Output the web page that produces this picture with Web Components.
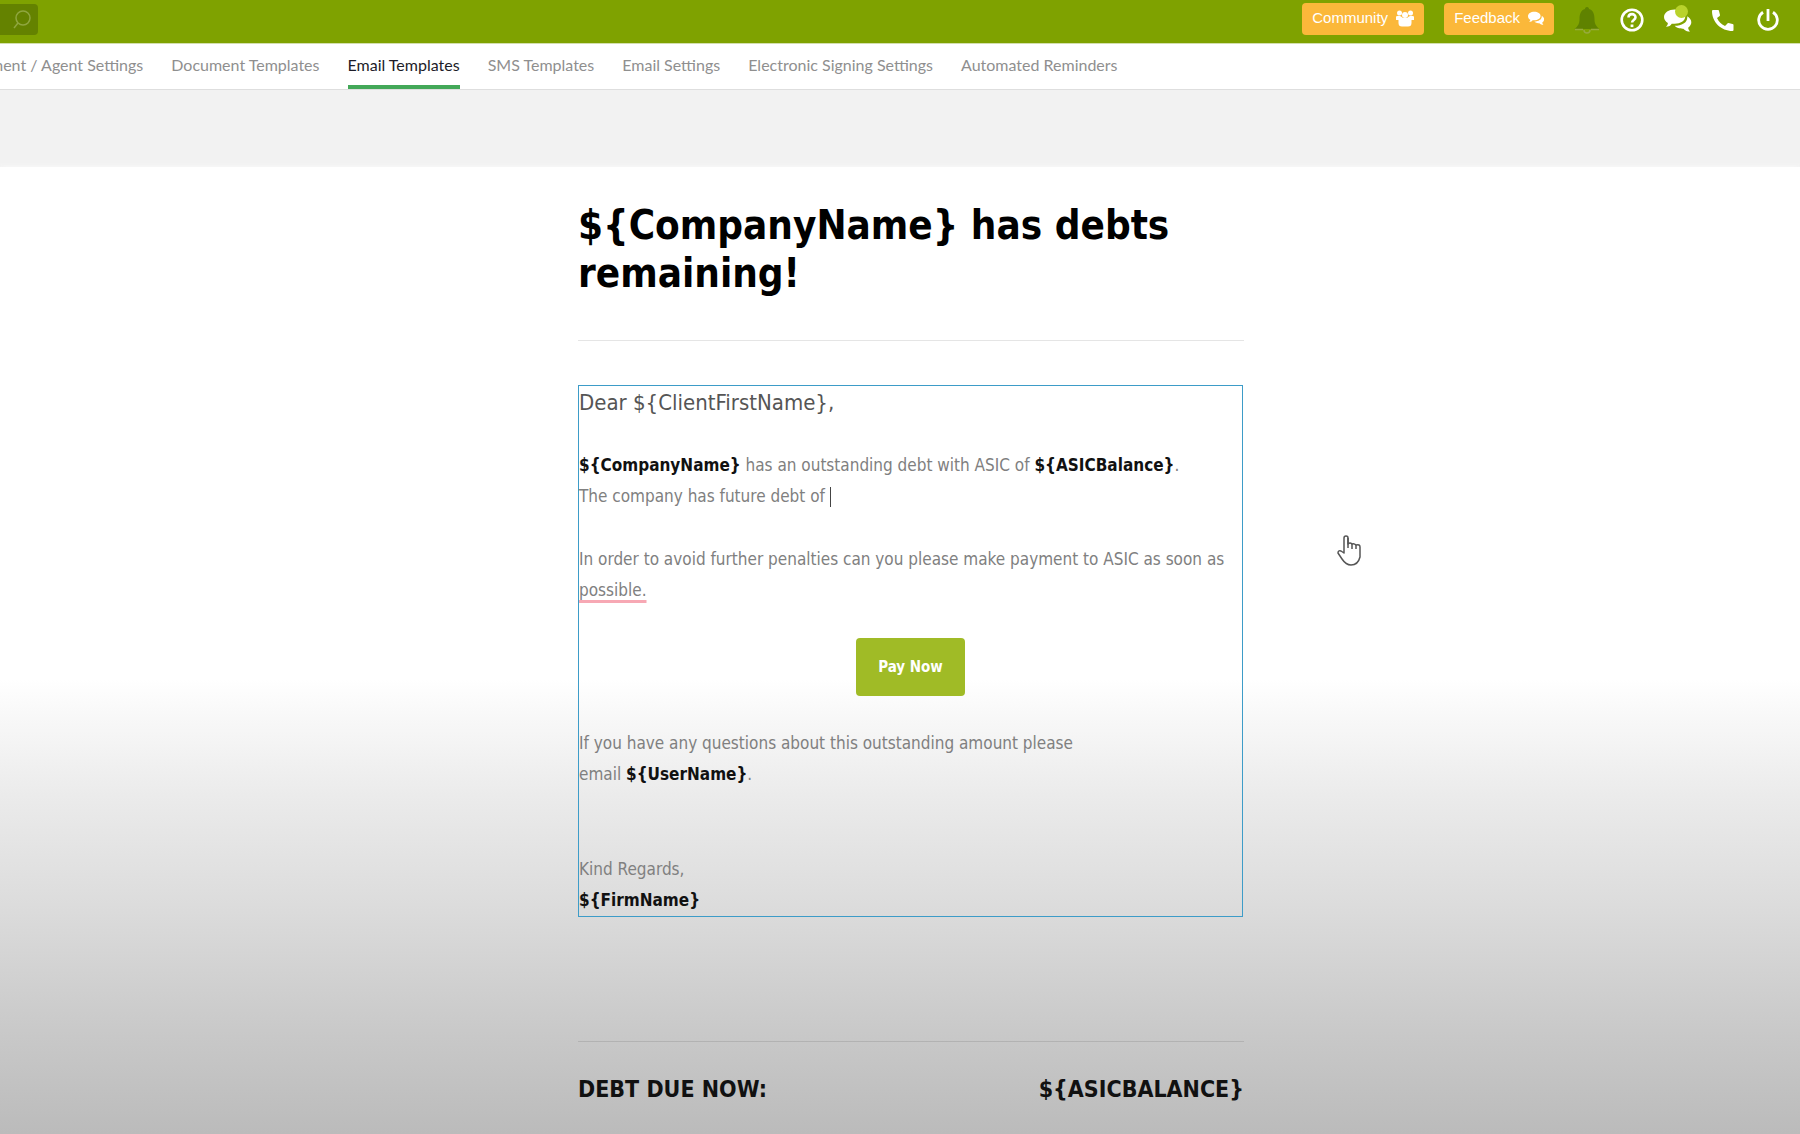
<!DOCTYPE html>
<html lang="en">
<head>
<meta charset="utf-8">
<title>Email Templates</title>
<style>
html, body
{
    height: 100%;
    margin: 0;
}
body
{
    display: flex;
    flex-direction: column;
    overflow: hidden;
    background: #f2f2f2;
    font-family: "DejaVu Sans Condensed", "DejaVu Sans", sans-serif;
}
</style>
</head>
<body>
<top-bar>
    <pill-button icon="people">Community</pill-button>
    <pill-button icon="chat">Feedback</pill-button>
</top-bar>
<tab-bar>
    <tab-link>ment / Agent Settings</tab-link>
    <tab-link>Document Templates</tab-link>
    <tab-link active>Email Templates</tab-link>
    <tab-link>SMS Templates</tab-link>
    <tab-link>Email Settings</tab-link>
    <tab-link>Electronic Signing Settings</tab-link>
    <tab-link>Automated Reminders</tab-link>
</tab-bar>
<email-page>
    <span slot="title">${CompanyName} has debts remaining!</span>
    <email-body></email-body>
    <span slot="due">DEBT DUE NOW:</span>
    <span slot="amount">${ASICBALANCE}</span>
</email-page>
<hand-pointer></hand-pointer>

<script>
const icons =
{
    people: `<svg width="18" height="18" viewBox="0 0 18 18" fill="#fff">
        <circle cx="3.500" cy="4" r="2.500"></circle><circle cx="14.500" cy="4" r="2.500"></circle><circle cx="9" cy="6" r="3"></circle>
        <path d="M0 7.500Q3 6 5 7.500L7 9H11L13 7.500Q15 6 18 7.500V11H15.500V14Q15.500 17.500 12 17.500H6Q2.500 17.500 2.500 14V11H0Z"></path></svg>`,
    chat: `<svg width="16" height="14" viewBox="0 0 28 24" fill="#fff">
        <path d="M11 1C5 1 0 4 0 9c0 3 2 5 4 6 0 2-1 3-2 4 3 0 5-1 6-3h3c6 0 11-3 11-7.500S17 1 11 1Z"></path>
        <path d="M24 8c1 6-5 10-13 10 3 3 7 3 9 3 2 2 4 3 7 3-1-1-2-3-2-4 5-4 4-9-1-12Z"></path></svg>`,
    bell: `<svg width="26" height="28" viewBox="0 0 26 28">
        <path d="M13 1c-1.500 0-2 1-2 2C7 4 5.500 8 5.500 13c0 5-1.500 7-5 10H25.500c-3.500-3-5-5-5-10C20.500 8 19 4 15 3c0-1-.5-2-2-2Z" fill="#5f8200"></path>
        <path d="M1 23.500H9M17 23.500H25M10 24q0 3 3 3t3-3" fill="none" stroke="#96aa3c" stroke-width="1.500"></path></svg>`,
    help: `<svg width="24" height="24" viewBox="0 0 24 24" fill="none" stroke="#fff">
        <circle cx="12" cy="12" r="10.300" stroke-width="2.600"></circle>
        <path d="M8.500 9.500C8.500 5 15.500 5 15.500 9.300c0 2.700-3.400 2.700-3.400 5.200" stroke-width="2.600"></path>
        <path d="M12 16.500v2.600" stroke-width="2.800"></path></svg>`,
    chats: `<svg width="28" height="24" viewBox="0 0 29 24" fill="#fff">
        <path d="M11 1C5 1 0 4 0 9c0 3 2 5 4 6 0 2-1 3-2 4 3 0 5-1 6-3h3c6 0 11-3 11-7.500S17 1 11 1Z"></path>
        <path d="M24 8c1 6-5 10-13 10 3 3 7 3 9 3 2 2 4 3 7 3-1-1-2-3-2-4 5-4 4-9-1-12Z"></path></svg>`,
    phone: `<svg width="25" height="22" viewBox="0 0 25 22" fill="#fff">
        <path d="M1 1h5q1 0 1 1l1 4q0 1-1 1.500L5 9c2 4 4 6 8 8l2-2q.5-1 1.500-1l4 1q1 .2 1 1v5q0 1-1 1C9 22 0 13 0 2q0-1 1-1Z"></path></svg>`,
    power: `<svg width="22" height="22" viewBox="0 0 22 22" fill="none" stroke="#fff" stroke-width="2.800">
        <path d="M6 3.200a9.300 9.300 0 1 0 10 0M11 0v12"></path></svg>`,
    search: `<svg width="18" height="20" viewBox="0 0 18 20" fill="none" stroke="#8fa63f" stroke-width="1.500">
        <circle cx="10" cy="8" r="7"></circle><path d="M5 13L1 18"></path></svg>`
};

class PillButton extends HTMLElement
{
    connectedCallback()
    {
        let root = this.attachShadow({mode: "open"});
        root.innerHTML =
        `<style>
        :host
        {
            display: block;
        }
        button
        {
            display: flex;
            align-items: center;
            gap: 8px;
            height: 32px;
            padding: 0 10px 2px;
            border: 0;
            border-radius: 4px;
            background: #fbb83a;
            color: #fff;
            font: 15px/20px "Liberation Sans", sans-serif;
        }
        svg
        {
            display: block;
        }
        </style>
        <button type="button"><slot></slot>${icons[this.getAttribute("icon")]}</button>`;
    }
}

customElements.define("pill-button", PillButton);


class IconButton extends HTMLElement
{
    connectedCallback()
    {
        let root = this.attachShadow({mode: "open"});
        root.innerHTML =
        `<style>
        :host
        {
            display: block;
            position: relative;
        }
        button
        {
            display: block;
            padding: 0;
            border: 0;
            background: none;
        }
        svg
        {
            display: block;
        }
        .badge
        {
            position: absolute;
            top: -3px;
            right: 4px;
            width: 13px;
            height: 13px;
            border-radius: 50%;
            background: #b9d22c;
        }
        </style>
        <button type="button" aria-label="${this.getAttribute("icon")}">${icons[this.getAttribute("icon")]}</button>
        ${this.hasAttribute("badge") ? '<span class="badge"></span>' : ""}`;
    }
}

customElements.define("icon-button", IconButton);


class TopBar extends HTMLElement
{
    connectedCallback()
    {
        let root = this.attachShadow({mode: "open"});
        root.innerHTML =
        `<style>
        :host
        {
            display: flex;
            justify-content: space-between;
            height: 44px;
            background: #7fa200;
            border-bottom: 1px solid #d3dfae;
            box-sizing: border-box;
            flex: none;
        }
        label
        {
            display: flex;
            align-items: center;
            align-self: flex-start;
            box-sizing: border-box;
            width: 38px;
            height: 31px;
            margin-top: 4px;
            border-radius: 0 4px 4px 0;
            background: #648200;
        }
        input
        {
            width: 13px;
            padding: 0;
            border: 0;
            background: none;
            outline: none;
        }
        .actions
        {
            display: flex;
            align-items: flex-start;
            gap: 20px;
            padding: 3px 21px 0 0;
        }
        .icons
        {
            display: flex;
            align-items: center;
            gap: 20px;
            height: 34px;
        }
        </style>
        <label><input type="text" aria-label="Search">${icons.search}</label>
        <div class="actions">
            <slot></slot>
            <div class="icons">
                <icon-button icon="bell"></icon-button>
                <icon-button icon="help"></icon-button>
                <icon-button icon="chats" badge></icon-button>
                <icon-button icon="phone"></icon-button>
                <icon-button icon="power"></icon-button>
            </div>
        </div>`;
    }
}

customElements.define("top-bar", TopBar);


class TabLink extends HTMLElement
{
    connectedCallback()
    {
        let root = this.attachShadow({mode: "open"});
        root.innerHTML =
        `<style>
        :host
        {
            display: block;
        }
        a
        {
            display: block;
            box-sizing: border-box;
            height: 45px;
            border-bottom: 4px solid transparent;
            color: #8f8f8f;
            font: 16px/42px Lato, sans-serif;
            text-decoration: none;
            white-space: nowrap;
        }
        :host([active]) a
        {
            border-color: #43a858;
            color: #1c1c28;
        }
        </style>
        <a href="#"><slot></slot></a>`;
    }
}

customElements.define("tab-link", TabLink);


class TabBar extends HTMLElement
{
    connectedCallback()
    {
        let root = this.attachShadow({mode: "open"});
        root.innerHTML =
        `<style>
        :host
        {
            display: block;
            flex: none;
            overflow: hidden;
            background: #fff;
            border-bottom: 1px solid #dedede;
        }
        nav
        {
            display: flex;
            gap: 28px;
            margin-left: -10px;
        }
        </style>
        <nav><slot></slot></nav>`;
    }
}

customElements.define("tab-bar", TabBar);


class EmailBody extends HTMLElement
{
    connectedCallback()
    {
        let root = this.attachShadow({mode: "open"});
        root.innerHTML =
        `<style>
        :host
        {
            display: block;
            margin-right: 1px;
            padding-top: 1px;
            border: 1px solid #3d9cc8;
            color: #808080;
            font-size: 17px;
            line-height: 31px;
        }
        p
        {
            margin: 0 0 32px;
        }
        .greeting
        {
            color: #555;
            font-size: 22px;
        }
        b
        {
            color: #111;
        }
        .caret
        {
            display: inline-block;
            width: 1px;
            height: 20px;
            background: #444;
            vertical-align: middle;
        }
        .spelling
        {
            text-decoration: underline 3px #f7a8b4;
            text-underline-offset: 4px;
            text-decoration-skip-ink: none;
        }
        a
        {
            display: block;
            width: fit-content;
            margin: 0 auto 32px;
            padding: 0 22px;
            border-radius: 4px;
            background: #a0bb26;
            color: #fff;
            font: bold 15px/58px "DejaVu Sans Condensed", "DejaVu Sans", sans-serif;
            text-decoration: none;
        }
        .closing
        {
            margin: 64px 0 0;
        }
        </style>
        <p class="greeting">Dear \${ClientFirstName},</p>
        <p><b>\${CompanyName}</b> has an outstanding debt with ASIC of <b>\${ASICBalance}</b>.<br>
        The company has future debt of <span class="caret"></span></p>
        <p>In order to avoid further penalties can you please make payment to ASIC as soon as <span class="spelling">possible.</span></p>
        <a href="#">Pay Now</a>
        <p>If you have any questions about this outstanding amount please<br>email <b>\${UserName}</b>.</p>
        <p class="closing">Kind Regards,<br><b>\${FirmName}</b></p>`;
    }
}

customElements.define("email-body", EmailBody);


class EmailPage extends HTMLElement
{
    connectedCallback()
    {
        let root = this.attachShadow({mode: "open"});
        root.innerHTML =
        `<style>
        :host
        {
            display: block;
            flex: 1;
            margin-top: 77px;
            padding: 34px 0 0 22px;
            background: linear-gradient(#fff 53%, #f8f8f8 57%, #ebebeb 65%, #dbdbdb 77%, #c8c8c8 90%, #bbb);
            box-shadow: 0 0 6px #fafafa;
        }
        main
        {
            max-width: 666px;
            margin: 0 auto;
        }
        h1
        {
            margin: 0;
            color: #000;
            font-size: 40px;
            line-height: 48px;
        }
        hr
        {
            height: 1px;
            margin: 43px 0 44px;
            border: 0;
            background: rgba(0, 0, 0, 0.1);
        }
        hr.lower
        {
            margin: 124px 0 31px;
        }
        .total
        {
            display: flex;
            justify-content: space-between;
            color: #111;
            font-size: 23px;
            font-weight: bold;
            line-height: 32px;
        }
        </style>
        <main>
            <h1><slot name="title"></slot></h1>
            <hr>
            <slot></slot>
            <hr class="lower">
            <div class="total"><slot name="due"></slot><slot name="amount"></slot></div>
        </main>`;
    }
}

customElements.define("email-page", EmailPage);


class HandPointer extends HTMLElement
{
    connectedCallback()
    {
        let root = this.attachShadow({mode: "open"});
        root.innerHTML =
        `<style>
        :host
        {
            position: absolute;
            left: 1337px;
            top: 535px;
        }
        svg
        {
            display: block;
        }
        </style>
        <svg width="25" height="32" viewBox="0 0 25 32" fill="#fff" stroke="#555" stroke-width="1.500" stroke-linejoin="round">
        <path d="M7 17V3Q7 1 9 1T11 3V9Q13 7 15 9Q17 8 19 10Q23 9 23 12V22Q21 30 14 30Q9 30 5 24L1 18Q1 15 4 16L7 18Z"></path>
        <path d="M11 3V13M15 9V14M19 10V14" fill="none"></path>
        </svg>`;
    }
}

customElements.define("hand-pointer", HandPointer);
</script>
</body>
</html>
